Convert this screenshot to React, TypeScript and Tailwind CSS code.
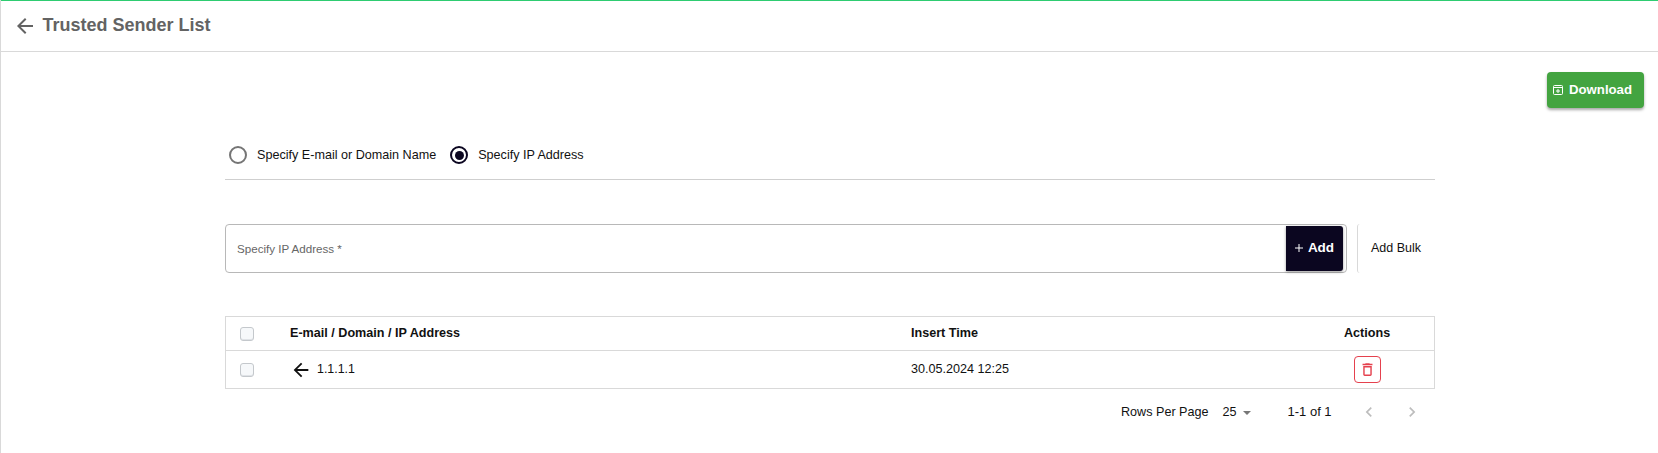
const Checkbox = () => (
  <span className="block w-[14px] h-[14px] rounded-[3px] border border-[#c4c8cc] bg-[#f6f8fa] shadow-[inset_0_-1px_0_#dfe2e6]" />
);

const Icon = ({ d, className }: { d: string; className: string }) => (
  <svg viewBox="0 0 24 24" fill="currentColor" className={className}>
    <path d={d} />
  </svg>
);

const ARROW_BACK = "M20 11H7.83l5.59-5.59L12 4l-8 8 8 8 1.41-1.41L7.83 13H20v-2z";
const CHEVRON_LEFT = "M15.41 7.41 14 6l-6 6 6 6 1.41-1.41L10.83 12z";
const CHEVRON_RIGHT = "M10 6 8.59 7.41 13.17 12l-4.58 4.59L10 18l6-6z";
const DELETE_OUTLINE = "M6 19c0 1.1.9 2 2 2h8c1.1 0 2-.9 2-2V7H6v12zM8 9h8v10H8V9zm7.5-5l-1-1h-5l-1 1H5v2h14V4z";

const DownloadIcon = () => (
  <svg width="10" height="10" viewBox="0 0 10 10" fill="none" stroke="white" strokeWidth="1">
    <rect x="0.5" y="0.5" width="9" height="9" rx="1" />
    <path d="M0.5 2.5h9M5 4v4M3 6h4" />
  </svg>
);

export default function App() {
  return (
    <div className="w-[1658px] h-[453px] bg-white font-['Liberation_Sans',Arial,sans-serif] overflow-hidden border-l-[1.5px] border-[#d9d9d9] text-[#111]">
      <header className="h-[52px] border-t border-[#2ecc71] border-b border-b-[#d9d9d9] flex items-center pl-[13px] -ml-[1.5px] pb-[1px]">
        <Icon d={ARROW_BACK} className="w-[24px] h-[24px] text-[#636363]" />
        <h1 className="ml-[6px] text-[18px] font-bold text-[#636363]">Trusted Sender List</h1>
      </header>

      <div className="flex justify-end pt-[20px] pr-[14px]">
        <button className="w-[97px] h-[36px] rounded-[4px] bg-[#43a440] text-white text-[13.2px] font-bold flex items-center pl-[6px] gap-[6px] shadow-[0_2px_3px_rgba(0,0,0,0.35)]">
          <DownloadIcon />
          Download
        </button>
      </div>

      <main className="ml-[224px] w-[1210px]">
        <div className="mt-[26px] h-[46px] flex items-center border-b border-[#cfcfcf] pb-[2px] text-[12.6px]">
          <label className="flex items-center pl-[4px]">
            <span className="w-[18px] h-[18px] rounded-full border-2 border-[#757575]" />
            <span className="ml-[10px]">Specify E-mail or Domain Name</span>
          </label>
          <label className="flex items-center ml-[14px]">
            <span className="w-[18px] h-[18px] rounded-full border-2 border-[#0b0620] flex items-center justify-center">
              <span className="w-[9px] h-[9px] rounded-full bg-[#0b0620]" />
            </span>
            <span className="ml-[10px]">Specify IP Address</span>
          </label>
        </div>

        <div className="mt-[44px] flex items-stretch h-[49px]">
          <div className="w-[1122px] rounded-[4px] border border-[#b8b8b8] flex items-center justify-between pl-[11px] pr-[3px]">
            <span className="text-[11.6px] text-[#666]">Specify IP Address *</span>
            <button className="w-[57px] h-[45px] rounded-r-[3px] bg-[#0b0620] text-white text-[13.5px] font-bold flex items-center justify-center gap-[5px] shadow-[0_1px_3px_rgba(0,0,0,0.4)]">
              <svg width="8" height="8" viewBox="0 0 8 8" stroke="white" strokeWidth="1" className="-mt-[1px]">
                <path d="M4 0v8M0 4h8" />
              </svg>
              Add
            </button>
          </div>
          <div className="ml-[10px] border-l border-[#d9d9d9] rounded-l-[3px] pl-[13px] flex items-center text-[12.5px] text-[#111]">
            Add Bulk
          </div>
        </div>

        <div className="mt-[43px] border border-[#d9d9d9] text-[12.6px]">
          <div className="h-[34px] grid grid-cols-[64px_621px_1fr_109px] items-center border-b border-[#d9d9d9] font-bold">
            <div className="pl-[14px]"><Checkbox /></div>
            <div>E-mail / Domain / IP Address</div>
            <div>Insert Time</div>
            <div className="pl-[19px]">Actions</div>
          </div>
          <div className="h-[37px] grid grid-cols-[64px_621px_1fr_109px] items-center">
            <div className="pl-[14px]"><Checkbox /></div>
            <div className="flex items-center">
              <Icon d={ARROW_BACK} className="w-[22px] h-[22px] text-[#111]" />
              <span className="ml-[5px] text-[12.4px]">1.1.1.1</span>
            </div>
            <div>30.05.2024 12:25</div>
            <div className="pl-[29px]">
              <span className="w-[27px] h-[27px] rounded-[4px] border border-[#e5414e] flex items-center justify-center">
                <Icon d={DELETE_OUTLINE} className="w-[17px] h-[17px] text-[#e5414e]" />
              </span>
            </div>
          </div>
        </div>

        <div className="mt-[11px] flex items-center text-[12.6px] h-[24px]">
          <span className="ml-[896px]">Rows Per Page</span>
          <span className="ml-[14px]">25</span>
          <span className="ml-[6px] mt-[1px] border-x-[4.5px] border-x-transparent border-t-[4.5px] border-t-[#777]" />
          <span className="ml-[37px] text-[13px]">1-1 of 1</span>
          <Icon d={CHEVRON_LEFT} className="ml-[27px] w-[20px] h-[20px] text-[#bdbdbd]" />
          <Icon d={CHEVRON_RIGHT} className="ml-[23px] w-[20px] h-[20px] text-[#bdbdbd]" />
        </div>
      </main>
    </div>
  );
}
